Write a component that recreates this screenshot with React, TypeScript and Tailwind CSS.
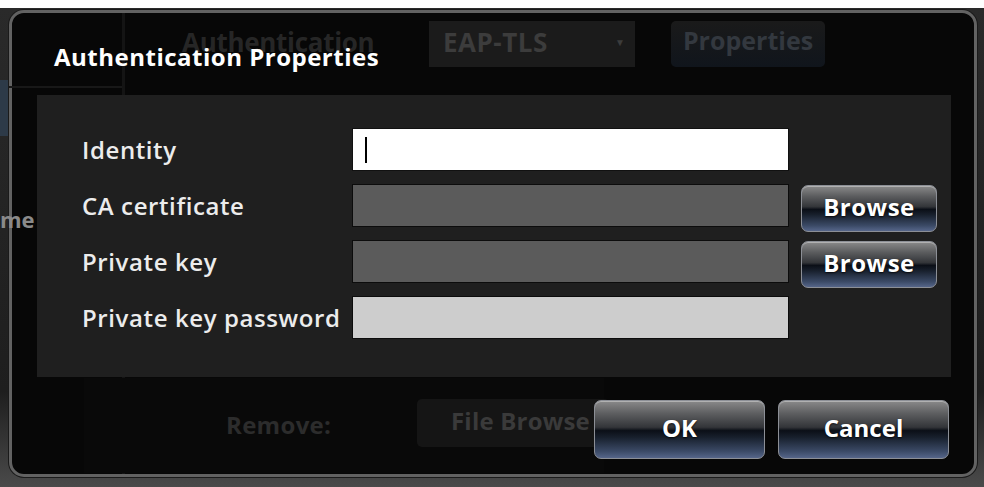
import React from "react";

const font = { fontFamily: '"Open Sans", "Liberation Sans", sans-serif' };

function GlossButton({ label, className }: { label: string; className: string }) {
  return (
    <div
      className={
        "flex items-center justify-center pb-[4px] rounded-[7px] border border-[#8c8f96] text-white font-bold shadow-[inset_0_1px_0_rgba(255,255,255,0.35)] bg-[linear-gradient(to_bottom,#8a8a8a_0%,#5d5e60_22%,#333539_46%,#0b0f17_52%,#18202d_64%,#3b4a66_88%,#56668a_100%)] [text-shadow:0_1px_2px_rgba(0,0,0,0.8)] " +
        className
      }
      style={font}
    >
      {label}
    </div>
  );
}

function Row({
  label,
  field,
  browse,
}: {
  label: string;
  field: React.ReactNode;
  browse?: boolean;
}) {
  return (
    <div className="flex h-[43px] items-start">
      <div className="w-[270px] h-[43px] flex items-center text-[24px] font-semibold text-[#ececec] tracking-[0.6px] whitespace-nowrap" style={font}>
        {label}
      </div>
      {field}
      {browse && <GlossButton label="Browse" className="ml-[12px] mt-[1px] w-[136px] h-[47px] text-[24px] tracking-[0.5px]" />}
    </div>
  );
}

export default function App() {
  return (
    <div className="w-[984px] h-[487px] bg-white overflow-hidden">
      <div className="relative mt-[8px] h-[479px] bg-[linear-gradient(to_bottom,#2a2a2a,#1e1e1e_80%,#4a4a4a)]">
        {/* background app hints */}
        <div className="absolute left-0 top-[72px] w-[12px] h-[56px] bg-[#2d3a48]" />

        {/* dialog */}
        <div className="absolute left-[9px] top-[2px] w-[968px] h-[467px] rounded-[15px] border-[3px] border-[#626262] bg-[#070707] shadow-[0_0_0_1px_#1a1a1a]">
          <div className="relative w-full h-full">
            {/* ghost background content seen through */}
            <div className="absolute left-[110px] top-0 w-[3px] h-full bg-[#141414]" />
            <div className="absolute left-[-3px] top-[73px] w-[113px] h-[2px] bg-[#181818]" />
            <div className="absolute left-[170px] top-[10px] text-[26px] font-bold text-[#262626] tracking-[-0.3px] whitespace-nowrap" style={font}>
              Authentication
            </div>
            <div className="absolute left-[417px] top-[8px] w-[206px] h-[46px] bg-[#1b1b1b] flex items-center pl-[14px] pr-[10px] pb-[4px] justify-between" style={font}>
              <span className="text-[26px] font-bold text-[#3c3c3c] tracking-[0.5px]">EAP-TLS</span>
              <span className="text-[10px] text-[#3c3c3c]">▼</span>
            </div>
            <div className="absolute left-[659px] top-[8px] w-[154px] h-[46px] pb-[6px] rounded-[5px] bg-[linear-gradient(to_bottom,#1a1a1a,#10151c)] flex items-center justify-center text-[25px] font-bold text-[#33383f] tracking-[0px]" style={font}>
              Properties
            </div>
            <div className="absolute left-[72px] top-[365px] w-[520px] h-[95px] bg-[#090909]" />
            <div className="absolute left-[214px] top-[394px] text-[24px] font-bold text-[#2c2c2c] tracking-[0.3px]" style={font}>
              Remove:
            </div>
            <div className="absolute left-[405px] top-[386px] w-[192px] h-[48px] pb-[4px] rounded-[5px] bg-[#151515] flex items-center pl-[34px] text-[24px] font-bold text-[#3a3a3a] tracking-[0.2px] whitespace-nowrap" style={font}>
              File Browse
            </div>

            {/* real dialog content */}
            <div className="relative flex flex-col h-full">
              <div className="h-[82px] pl-[42px] pt-[26px] text-[24px] font-bold text-white tracking-[0.5px] whitespace-nowrap" style={font}>
                Authentication Properties
              </div>
              <div className="ml-[25px] w-[914px] h-[282px] bg-[#1f1f1f] pl-[45px] pt-[33px] flex flex-col gap-[13px]">
                <Row
                  label="Identity"
                  field={
                    <div className="w-[437px] h-[43px] bg-white border border-[#111] flex items-center pl-[12px]">
                      <div className="w-[2px] h-[26px] bg-black" />
                    </div>
                  }
                />
                <Row label="CA certificate" browse field={<div className="w-[437px] h-[43px] bg-[#5b5b5b] border border-[#0c0c0c]" />} />
                <Row label="Private key" browse field={<div className="w-[437px] h-[43px] bg-[#5b5b5b] border border-[#0c0c0c]" />} />
                <Row label="Private key password" field={<div className="w-[437px] h-[43px] bg-[#cdcdcd] border border-[#0c0c0c]" />} />
              </div>
              <div className="flex justify-end gap-[13px] pr-[25px] mt-[23px]">
                <GlossButton label="OK" className="w-[171px] h-[59px] text-[24px]" />
                <GlossButton label="Cancel" className="w-[171px] h-[59px] text-[24px]" />
              </div>
            </div>
          </div>
        </div>

        <div className="absolute left-0 top-[195px] text-[22px] font-bold text-[#8a8a8a]" style={font}>
          me
        </div>
      </div>
    </div>
  );
}
